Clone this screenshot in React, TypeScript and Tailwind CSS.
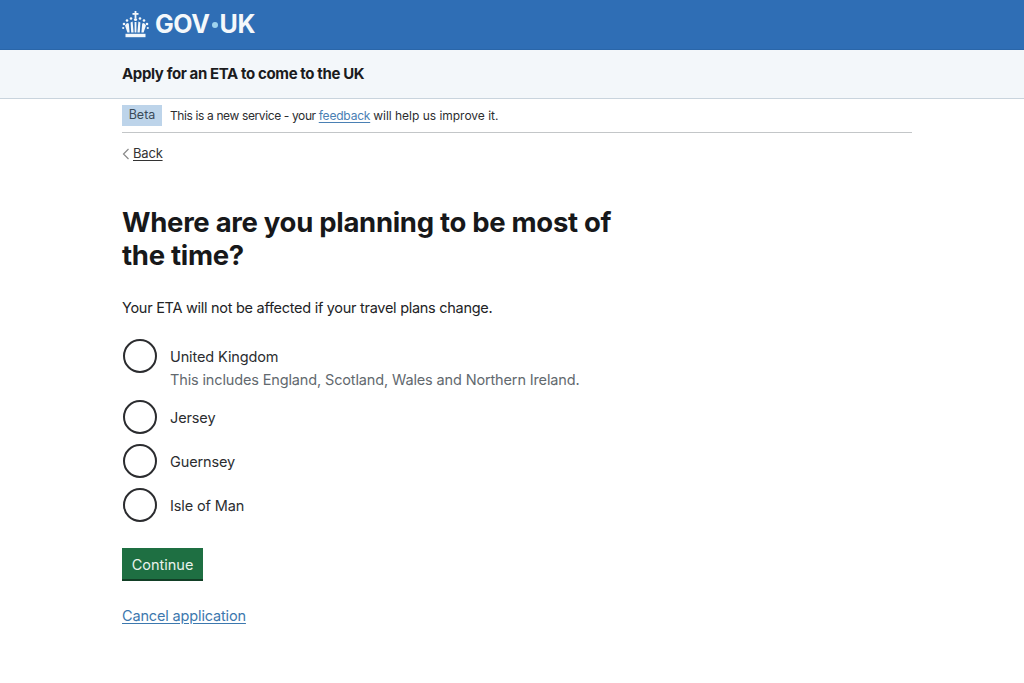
import { ReactNode } from 'react';

function Crown() {
  return (
    <svg width="27" height="27" viewBox="0 0 27 27" fill="#f2f7fb" className="block">
      <rect x="12.6" y="0" width="1.8" height="7" />
      <rect x="10.5" y="2" width="6" height="1.8" />
      <circle cx="13.5" cy="8.5" r="1.6" />
      <circle cx="9" cy="7.5" r="1.3" />
      <circle cx="18" cy="7.5" r="1.3" />
      <circle cx="5" cy="9.5" r="1.3" />
      <circle cx="22" cy="9.5" r="1.3" />
      <circle cx="2" cy="13" r="1.3" />
      <circle cx="25" cy="13" r="1.3" />
      <circle cx="1.2" cy="17" r="1.1" />
      <circle cx="25.8" cy="17" r="1.1" />
      <path d="M3 14.5 L5 12 L6.8 12.5 L7.6 21.5 H5.4 Z M8.6 11.5 L10.6 10.5 L11.6 21.5 H9.2 Z M12.6 11 H14.4 V21.5 H12.6 Z M16.4 10.5 L18.4 11.5 L17.8 21.5 H15.4 Z M20.2 12.5 L22 12 L24 14.5 L21.6 21.5 H19.4 Z" />
      <rect x="3.5" y="22.8" width="20" height="3.4" />
    </svg>
  );
}

function Radio({ label, hint }: { label: string; hint?: ReactNode }) {
  return (
    <div className="flex items-start">
      <span className="ml-[1px] h-[34px] w-[34px] shrink-0 rounded-full border-2 border-[#2b2c2f]" />
      <div className="ml-[13px] flex flex-col">
        <span className="flex h-[34px] items-center pt-[2px] text-[14.5px] tracking-[-0.12px] text-[#2b2d30]">{label}</span>
        {hint && <span className="mt-[-3px] text-[14.5px] leading-[20px] tracking-[-0.14px] text-[#62696e]">{hint}</span>}
      </div>
    </div>
  );
}

export default function App() {
  return (
    <div className="min-h-[683px] bg-white font-['Inter',sans-serif] text-[#1b1c1e]">
      <header className="flex h-[50px] items-center border-b border-[#2a66a9] bg-[#2f6eb5] pl-[122px]">
        <Crown />
        <span className="ml-[6px] flex items-center text-[25px] font-bold tracking-[-0.4px] text-[#f4f8fb]">
          GOV<span className="mx-[2px] h-[6px] w-[6px] rounded-full bg-[#9fd3ee]" />UK
        </span>
      </header>
      <div className="flex h-[49px] items-center border-b border-[#c9d4dd] bg-[#f3f7fa] pl-[122px]">
        <span className="text-[15px] font-bold tracking-[-0.38px]">Apply for an ETA to come to the UK</span>
      </div>
      <main className="pl-[122px]">
        <div className="flex h-[34px] w-[790px] items-center border-b border-[#c3c6c8]">
          <span className="flex h-[21px] w-[40px] items-center justify-center bg-[#bdd4ea] text-[12.5px] text-[#3a4a58]">Beta</span>
          <span className="ml-[8px] text-[12px] tracking-[-0.38px] text-[#2c2d2f]">
            This is a new service - your <span className="tracking-[-0.2px] text-[#4a80b4] underline underline-offset-2">feedback</span> <span className="tracking-[-0.02px]">will help us improve it.</span>
          </span>
        </div>
        <div className="mt-[12px] flex h-[18px] items-center">
          <svg width="8" height="12" viewBox="0 0 8 12" fill="none" stroke="#8a8a8a" strokeWidth="1.2"><path d="M6.5 1 L1.5 6 L6.5 11" /></svg>
          <span className="ml-[3px] text-[13px] tracking-[-0.2px] text-[#333] underline underline-offset-2">Back</span>
        </div>
        <h1 className="mt-[43px] w-[520px] text-[27.5px] leading-[33px] font-bold tracking-[-0.3px] text-[#17181a]">
          Where are you planning to be most of the time?
        </h1>
        <p className="mt-[26px] text-[14.5px] leading-[20px] tracking-[-0.28px] text-[#222325]">Your ETA will not be affected if your travel plans change.</p>
        <div className="mt-[21px] flex flex-col gap-[10px]">
          <Radio label="United Kingdom" hint="This includes England, Scotland, Wales and Northern Ireland." />
          <Radio label="Jersey" />
          <Radio label="Guernsey" />
          <Radio label="Isle of Man" />
        </div>
        <button className="mt-[26px] block h-[33px] w-[81px] border-b-2 border-[#123f26] bg-[#1e6f42] pt-[2px] text-[14.5px] text-[#e9f3ed]">Continue</button>
        <a className="mt-[24px] inline-block text-[14.5px] tracking-[-0.15px] text-[#3c78ae] underline underline-offset-2">Cancel application</a>
      </main>
    </div>
  );
}
